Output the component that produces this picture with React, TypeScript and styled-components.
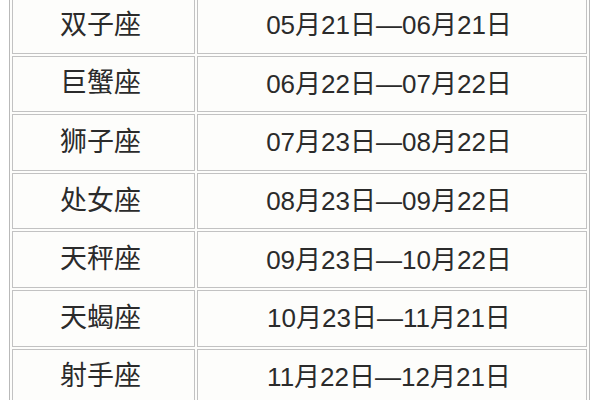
import React from "react";
import styled, { createGlobalStyle } from "styled-components";

interface ISign {
  name: string;
  range: string;
}

const signs: ISign[] = [
  { name: "双子座", range: "05月21日—06月21日" },
  { name: "巨蟹座", range: "06月22日—07月22日" },
  { name: "狮子座", range: "07月23日—08月22日" },
  { name: "处女座", range: "08月23日—09月22日" },
  { name: "天秤座", range: "09月23日—10月22日" },
  { name: "天蝎座", range: "10月23日—11月21日" },
  { name: "射手座", range: "11月22日—12月21日" },
];

const App: React.FC = () => {
  return (
    <>
      <GlobalStyle />
      <Page>
        <Table>
          <tbody>
            {signs.map((item, index) => (
              <Row key={index}>
                <NameCell>{item.name}</NameCell>
                <DateCell>{item.range}</DateCell>
              </Row>
            ))}
          </tbody>
        </Table>
      </Page>
    </>
  );
};

const GlobalStyle = createGlobalStyle`
  html, body {
    margin: 0;
    padding: 0;
    background: #ffffff;
  }
  body {
    width: 600px;
    height: 400px;
    overflow: hidden;
  }
`;

const Page = styled.div`
  display: flex;
  padding-left: 9px;
  margin-top: -6px;
  font-family: "Liberation Sans", "Noto Sans CJK SC", sans-serif;
  color: #2b2b2b;
`;

const Table = styled.table`
  width: 581px;
  border: 1px solid #b9b9b9;
  border-spacing: 2px;
  background: #fdfdfb;
  table-layout: fixed;
`;

const Row = styled.tr`
  height: 56.6px;
`;

const Cell = styled.td`
  box-sizing: border-box;
  border: 1px solid #c2c2c2;
  padding: 0;
  text-align: center;
  vertical-align: middle;
  font-size: 26px;
  line-height: 1;
`;

const NameCell = styled(Cell)`
  width: 183px;
  font-size: 27px;
  padding-right: 6px;
`;

const DateCell = styled(Cell)`
  padding-right: 6px;
`;

export default App;
